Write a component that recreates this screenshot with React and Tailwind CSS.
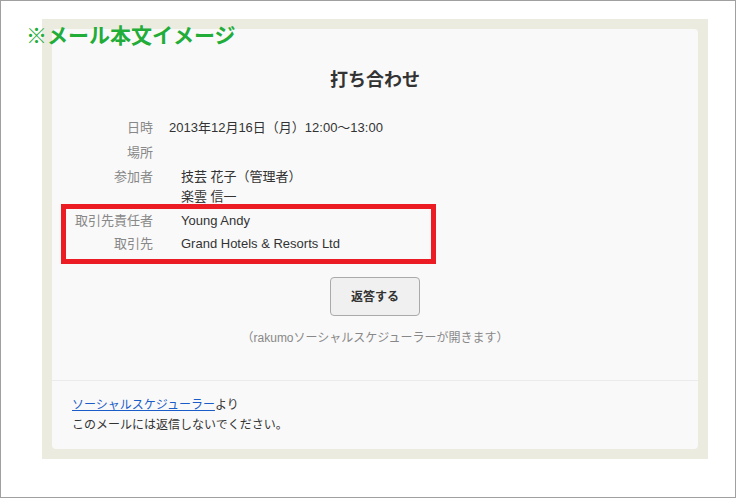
export default function App() {
  const jp = { fontFamily: '"Liberation Sans", "Noto Sans CJK JP", sans-serif' };
  return (
    <div className="relative w-[736px] h-[498px] border border-[#a0a0a0] bg-white overflow-hidden" style={jp}>
      <div className="pl-[41px] pt-[18px]">
        <div className="w-[666px] h-[440px] bg-[#ebebe0] p-[10px]">
          <div className="relative w-[646px] h-[420px] rounded-[4px] bg-[#f9f9f9]">
            <div className="pt-[39px] h-[63px] text-center text-[18px] leading-[24px] font-bold text-[#333]">打ち合わせ</div>
            <div className="mt-[24px] text-[13px] text-[#333]">
              <div className="flex h-[24px] items-center">
                <div className="w-[101px] text-right text-[#888]">日時</div>
                <div className="ml-[16px]">2013年12月16日（月）12:00～13:00</div>
              </div>
              <div className="flex h-[26px] items-center">
                <div className="w-[101px] text-right text-[#888]">場所</div>
              </div>
              <div className="flex pt-[1px] pb-[2px]">
                <div className="w-[101px] text-right text-[#888] leading-[20px]">参加者</div>
                <div className="ml-[28px] leading-[20px]">
                  <div>技芸 花子（管理者）</div>
                  <div>楽雲 信一</div>
                </div>
              </div>
              <div className="flex h-[23px] items-center">
                <div className="w-[101px] text-right text-[#888]">取引先責任者</div>
                <div className="ml-[28px]">Young Andy</div>
              </div>
              <div className="flex h-[24px] items-center">
                <div className="w-[101px] text-right text-[#888]">取引先</div>
                <div className="ml-[28px]">Grand Hotels &amp; Resorts Ltd</div>
              </div>
            </div>
            <div className="mt-[21px] flex justify-center">
              <button className="w-[90px] h-[39px] rounded-[4px] border border-[#aaa] bg-[#f0f0f0] text-[12px] font-bold text-[#333]">返答する</button>
            </div>
            <div className="mt-[12px] h-[20px] leading-[20px] text-center text-[12px] text-[#888]">（rakumoソーシャルスケジューラーが開きます）</div>
            <div className="mt-[32px] border-t border-[#ebebeb]"></div>
            <div className="pt-[14px] pl-[20px] text-[12px] leading-[20px] text-[#333]">
              <div><span className="text-[#1a5cc8] underline">ソーシャルスケジューラー</span>より</div>
              <div>このメールには返信しないでください。</div>
            </div>
            <div className="absolute left-[9px] top-[175px] w-[375px] h-[60px] border-[5px] border-[#ec1c24]"></div>
          </div>
        </div>
      </div>
      <div className="absolute left-[25px] top-[19px] text-[21px] leading-[28px] font-bold text-[#22ac38]" style={{ fontFamily: '"Noto Sans CJK JP", sans-serif' }}>※メール本文イメージ</div>
    </div>
  );
}
